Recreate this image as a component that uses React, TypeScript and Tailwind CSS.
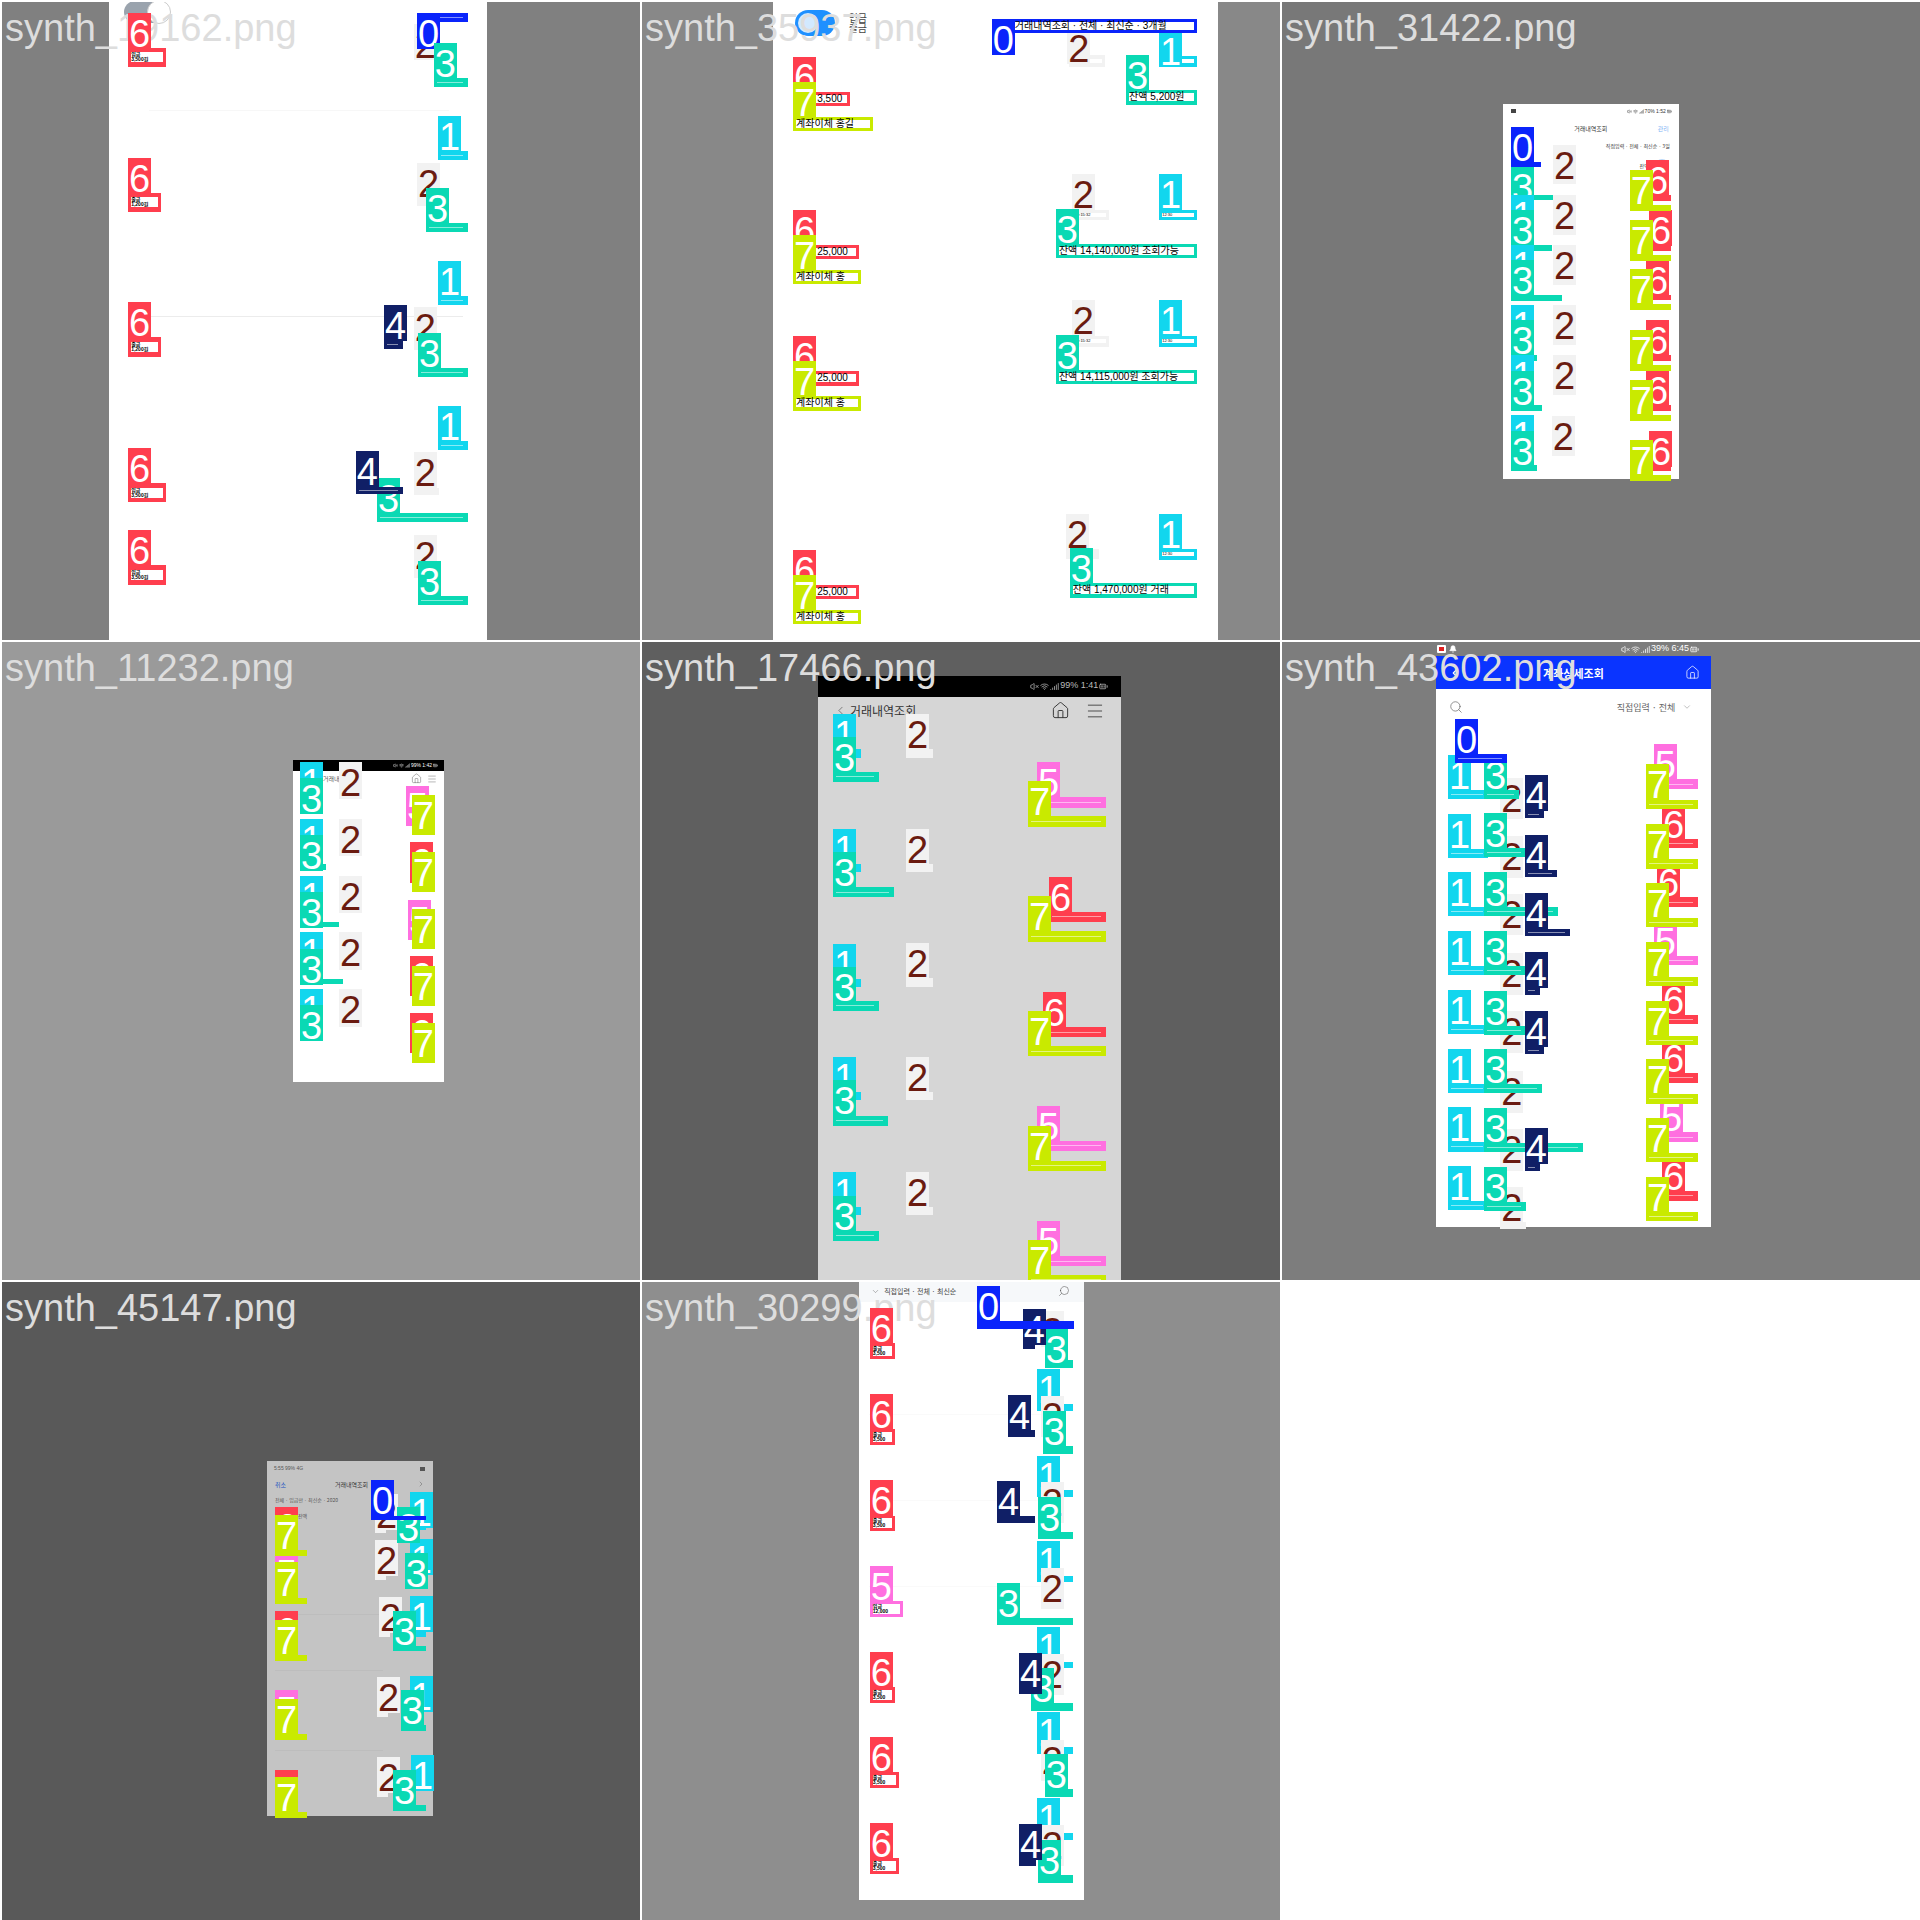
import { BatteryFull, Bell, ChevronDown, ChevronLeft, ChevronRight, Home, Menu, Search, Signal, VolumeX, Wifi } from "lucide-react";
import React from "react";

// every number in the box lists is read off the 2.45x crops of one 640px tile
const S = 2.45;
const px = (v: number) => v / S;
const pos = (v: number) => v / S - 2;

const TAG_BG: Record<number, string> = {
  0: "bg-[#0a24fb] text-white",
  1: "bg-[#12d6ee] text-white",
  2: "bg-[#f2f2f2] text-[#6a1b10]",
  3: "bg-[#0ad9b4] text-white",
  4: "bg-[#101f66] text-white",
  5: "bg-[#ff6fe0] text-white",
  6: "bg-[#ff3e4e] text-white",
  7: "bg-[#c9ea00] text-white",
};

const BAR_BG: Record<number, string> = {
  0: "bg-[#0a24fb]",
  1: "bg-[#12d6ee]",
  2: "bg-[#f2f2f2]",
  3: "bg-[#0ad9b4]",
  4: "bg-[#101f66]",
  5: "bg-[#ff6fe0]",
  6: "bg-[#ff3e4e]",
  7: "bg-[#c9ea00]",
};

type B = [number, number, number, number?, number?, number?, number?, string?];

function Bar({ b, lines }: { b: B; lines: boolean }) {
  const [c, , , x1, y1, x2, y2, text] = b;
  if (x1 === undefined) return null;
  const two = text?.includes("\n");
  const tall = y2! - y1! > 30;
  return (
    <div
      className={`absolute flex items-center overflow-hidden px-[3px] ${BAR_BG[c]}`}
      style={{ left: pos(x1), top: pos(y1!), width: px(x2! - x1), height: px(y2! - y1!) }}
    >
      {text ? (
        two ? (
          <span className="w-full whitespace-pre bg-white text-[5px] leading-[5px] font-bold text-black">{text}</span>
        ) : (
          <span className={`w-full whitespace-pre bg-white text-black ${tall ? "h-[8px] text-[10px] leading-[8px]" : "text-[4px] leading-[4px]"} ${c === 0 ? "ml-[20px]" : ""}`}>
            {text}
          </span>
        )
      ) : lines && c !== 2 ? (
        <span className="mr-[2px] h-px w-full bg-white/50" />
      ) : null}
    </div>
  );
}

function Tag({ b }: { b: B }) {
  const [c, x, y] = b;
  return (
    <div
      className={`absolute h-[36px] w-[23px] text-center font-['Liberation_Sans',sans-serif] text-[38px] leading-[43px] ${TAG_BG[c]}`}
      style={{ left: pos(x), top: pos(y) }}
    >
      {c}
    </div>
  );
}

function Boxes({ list, lines }: { list: B[]; lines: boolean }) {
  return (
    <>
      {list.map((b, i) => (
        <React.Fragment key={i}>
          <Bar b={b} lines={lines} />
          <Tag b={b} />
        </React.Fragment>
      ))}
    </>
  );
}

function Tile({
  name,
  bg,
  phone,
  phoneBg,
  boxes,
  lines = false,
  outside,
  children,
}: {
  name: string;
  bg: string;
  phone: [number, number, number, number];
  phoneBg: string;
  boxes: B[];
  lines?: boolean;
  outside?: React.ReactNode;
  children?: React.ReactNode;
}) {
  return (
    <div className={`relative h-[640px] w-[640px] overflow-hidden border-t-2 border-l-2 border-white ${bg}`}>
      <div
        className={`absolute flex flex-col overflow-hidden ${phoneBg}`}
        style={{ left: pos(phone[0]), top: pos(phone[1]), width: px(phone[2] - phone[0]), height: px(phone[3] - phone[1]) }}
      >
        {children}
      </div>
      {outside}
      <div className="absolute top-[4px] left-[3px] whitespace-nowrap text-[38px] leading-[44px] text-[#dddddd]">{name}</div>
      <Boxes list={boxes} lines={lines} />
    </div>
  );
}

const t1: B[] = [
  [2, 1014, 60, 1014, 147, 1072, 147],
  [0, 1022, 32, 1022, 32, 1147, 53],
  [3, 1063, 105, 1063, 190, 1147, 213],
  [6, 314, 32, 314, 118, 407, 163, "입금\n3,500원"],
  [1, 1073, 284, 1073, 370, 1147, 392],
  [2, 1022, 400, 1022, 488, 1078, 505],
  [3, 1044, 461, 1044, 546, 1147, 568],
  [6, 314, 387, 314, 473, 394, 519, "출금\n1,200원"],
  [1, 1073, 639, 1073, 725, 1147, 747],
  [2, 1014, 752, 1014, 840, 1070, 857],
  [3, 1024, 816, 1024, 902, 1147, 924],
  [4, 941, 747, 941, 835, 987, 855],
  [6, 314, 740, 314, 826, 394, 875, "출금\n1,200원"],
  [1, 1073, 995, 1073, 1080, 1147, 1102],
  [2, 1014, 1107, 1014, 1195, 1075, 1213],
  [3, 924, 1172, 924, 1257, 1147, 1279],
  [4, 872, 1105, 872, 1192, 987, 1210],
  [6, 314, 1098, 314, 1184, 407, 1230, "입금\n3,500원"],
  [2, 1014, 1311, 1014, 1398, 1070, 1415],
  [3, 1024, 1374, 1024, 1460, 1147, 1482],
  [6, 314, 1298, 314, 1385, 407, 1433, "입금\n3,500원"],
];

const t2: B[] = [
  [2, 1047, 68, 1050, 135, 1140, 163, "10:15:32"],
  [1, 1272, 75, 1272, 138, 1365, 163, "12:30"],
  [0, 862, 47, 862, 47, 1365, 82, "거래내역조회 · 전체 · 최신순 · 3개월"],
  [3, 1191, 135, 1191, 220, 1365, 257, "잔액 5,200원"],
  [6, 375, 140, 375, 226, 514, 260, "입금 3,500"],
  [7, 375, 202, 375, 287, 571, 321, "계좌이체 홍길"],
  [2, 1058, 426, 1058, 514, 1148, 538, "10:15:32"],
  [1, 1272, 426, 1272, 514, 1365, 538, "12:30"],
  [3, 1019, 512, 1019, 598, 1365, 632, "잔액 14,140,000원 조회가능"],
  [6, 375, 514, 375, 600, 537, 635, "입금 25,000"],
  [7, 375, 576, 375, 661, 541, 696, "계좌이체 홍"],
  [2, 1058, 735, 1058, 823, 1148, 850, "10:15:32"],
  [1, 1272, 735, 1272, 822, 1365, 850, "12:30"],
  [3, 1019, 821, 1019, 907, 1365, 942, "잔액 14,115,000원 조회가능"],
  [6, 375, 823, 375, 909, 537, 945, "입금 25,000"],
  [7, 375, 884, 375, 970, 541, 1006, "계좌이체 홍"],
  [2, 1044, 1259, 1044, 1345, 1125, 1370],
  [1, 1272, 1259, 1272, 1345, 1365, 1371, "12:30"],
  [3, 1053, 1343, 1053, 1428, 1365, 1465, "잔액 1,470,000원 거래"],
  [6, 375, 1347, 375, 1433, 537, 1468, "입금 25,000"],
  [7, 375, 1408, 375, 1494, 541, 1528, "계좌이체 홍"],
];

const t3: B[] = [
  [0, 566, 311, 566, 397, 639, 408],
  [3, 566, 410, 566, 477, 669, 491],
  [2, 669, 355, 669, 440, 725, 452],
  [1, 566, 478],
  [3, 566, 515, 566, 600, 666, 615],
  [2, 669, 478, 669, 560, 725, 576],
  [1, 566, 600],
  [3, 566, 637, 566, 723, 691, 737],
  [2, 669, 600, 669, 680, 725, 698],
  [1, 566, 747],
  [3, 566, 785, 566, 870, 630, 884],
  [2, 669, 747, 669, 830, 725, 845],
  [1, 566, 870],
  [3, 566, 908, 566, 993, 642, 1007],
  [2, 669, 870, 669, 950, 725, 968],
  [1, 566, 1017],
  [3, 566, 1055, 566, 1140, 630, 1154],
  [2, 666, 1020, 666, 1100, 722, 1118],
  [6, 897, 391, 897, 478, 958, 492],
  [6, 904, 514, 904, 600, 958, 614],
  [6, 897, 637, 897, 722, 958, 736],
  [6, 897, 784, 897, 870, 958, 885],
  [6, 897, 906, 897, 993, 958, 1007],
  [6, 904, 1056, 904, 1140, 958, 1155],
  [7, 857, 416, 857, 502, 958, 517],
  [7, 857, 539, 857, 625, 958, 639],
  [7, 857, 659, 857, 745, 958, 759],
  [7, 857, 808, 857, 894, 958, 908],
  [7, 857, 931, 857, 1017, 958, 1031],
  [7, 857, 1078, 857, 1164, 958, 1178],
];

const t4: B[] = [
  [1, 735, 299, 735, 385, 791, 416],
  [1, 735, 439, 735, 525, 791, 550],
  [1, 735, 578, 735, 664, 791, 690],
  [1, 735, 715, 735, 800, 791, 830],
  [1, 735, 855, 735, 940, 791, 970],
  [3, 735, 338, 735, 416, 779, 424],
  [3, 735, 477, 735, 550, 799, 563],
  [3, 735, 617, 735, 691, 831, 703],
  [3, 735, 756, 735, 831, 840, 843],
  [3, 735, 895, 735, 970, 791, 982],
  [2, 831, 299, 831, 375, 887, 390],
  [2, 831, 439, 831, 515, 887, 530],
  [2, 831, 578, 831, 655, 887, 670],
  [2, 831, 715, 831, 795, 887, 808],
  [2, 831, 855, 831, 930, 887, 948],
  [5, 995, 358, 995, 440, 1051, 456],
  [5, 1000, 637, 1000, 720, 1056, 735],
  [6, 1004, 495, 1004, 580, 1060, 595],
  [6, 1004, 774, 1004, 858, 1060, 872],
  [6, 1004, 914, 1004, 998, 1060, 1012],
  [7, 1009, 380, 1009, 462, 1066, 477],
  [7, 1009, 519, 1009, 602, 1066, 617],
  [7, 1009, 659, 1009, 742, 1066, 757],
  [7, 1009, 799, 1009, 882, 1066, 897],
  [7, 1009, 938, 1009, 1022, 1066, 1036],
];

const t5: B[] = [
  [1, 473, 182, 473, 268, 541, 288],
  [2, 652, 182, 652, 268, 718, 288],
  [3, 473, 238, 473, 323, 586, 347],
  [5, 973, 298, 973, 385, 1142, 412],
  [7, 951, 345, 951, 431, 1142, 458],
  [1, 473, 463, 473, 550, 541, 568],
  [2, 652, 463, 652, 549, 718, 568],
  [3, 473, 520, 473, 605, 622, 630],
  [6, 1002, 581, 1002, 666, 1142, 691],
  [7, 951, 627, 951, 713, 1142, 739],
  [1, 473, 745, 473, 830, 541, 850],
  [2, 652, 742, 652, 828, 718, 850],
  [3, 473, 802, 473, 884, 586, 909],
  [6, 987, 862, 987, 948, 1142, 973],
  [7, 951, 909, 951, 995, 1142, 1019],
  [1, 473, 1022, 473, 1107, 541, 1127],
  [2, 652, 1022, 652, 1107, 718, 1127],
  [3, 473, 1078, 473, 1165, 608, 1190],
  [5, 973, 1142, 973, 1227, 1142, 1252],
  [7, 951, 1191, 951, 1276, 1142, 1301],
  [1, 473, 1304, 473, 1389, 541, 1409],
  [2, 652, 1304, 652, 1390, 718, 1409],
  [3, 473, 1362, 473, 1447, 586, 1472],
  [5, 973, 1423, 973, 1509, 1142, 1534],
  [7, 951, 1470, 951, 1556, 1142, 1580],
];

const t6: B[] = [
  [1, 412, 282, 412, 368, 510, 390],
  [1, 412, 426, 412, 512, 510, 534],
  [1, 412, 568, 412, 654, 510, 676],
  [1, 412, 713, 412, 799, 510, 822],
  [1, 412, 857, 412, 943, 510, 965],
  [1, 412, 1002, 412, 1088, 510, 1110],
  [1, 412, 1144, 412, 1230, 510, 1254],
  [1, 412, 1289, 412, 1375, 510, 1396],
  [2, 540, 337, 540, 423, 596, 438],
  [2, 540, 480, 540, 566, 596, 582],
  [2, 540, 622, 540, 708, 596, 724],
  [2, 540, 767, 540, 853, 596, 869],
  [2, 540, 910, 540, 996, 596, 1012],
  [2, 540, 1056, 540, 1142, 596, 1158],
  [2, 540, 1198, 540, 1284, 596, 1300],
  [2, 540, 1340, 540, 1426, 602, 1442],
  [3, 500, 282, 500, 367, 585, 389],
  [3, 500, 423, 500, 510, 603, 532],
  [3, 500, 568, 500, 654, 681, 676],
  [3, 500, 713, 500, 799, 603, 821],
  [3, 500, 860, 500, 946, 603, 967],
  [3, 500, 1002, 500, 1088, 642, 1110],
  [3, 500, 1147, 500, 1232, 742, 1254],
  [3, 500, 1291, 500, 1377, 603, 1399],
  [4, 600, 331, 600, 417, 647, 436],
  [4, 600, 478, 600, 563, 679, 581],
  [4, 600, 620, 600, 707, 710, 725],
  [4, 600, 764, 600, 850, 637, 869],
  [4, 600, 909, 600, 996, 647, 1014],
  [4, 600, 1196, 600, 1282, 637, 1301],
  [5, 916, 255, 916, 341, 1024, 365],
  [6, 936, 402, 936, 488, 1024, 510],
  [6, 924, 544, 924, 630, 1024, 654],
  [5, 916, 688, 916, 774, 1024, 796],
  [6, 936, 833, 936, 919, 1024, 941],
  [6, 936, 976, 936, 1061, 1024, 1085],
  [5, 931, 1120, 931, 1206, 1024, 1230],
  [6, 936, 1264, 936, 1350, 1024, 1374],
  [7, 897, 305, 897, 391, 1024, 415],
  [7, 897, 451, 897, 537, 1024, 560],
  [7, 897, 595, 897, 681, 1024, 703],
  [7, 897, 740, 897, 826, 1024, 848],
  [7, 897, 884, 897, 970, 1024, 992],
  [7, 897, 1027, 897, 1113, 1024, 1136],
  [7, 897, 1171, 897, 1257, 1024, 1279],
  [7, 897, 1316, 897, 1402, 1024, 1423],
  [0, 429, 194, 429, 279, 556, 301],
];

const t7: B[] = [
  [6, 674, 555],
  [5, 674, 670],
  [6, 674, 811],
  [5, 674, 1005],
  [6, 674, 1200],
  [7, 674, 576, 674, 662, 751, 677],
  [7, 674, 692, 674, 778, 751, 793],
  [7, 674, 833, 674, 919, 751, 934],
  [7, 674, 1027, 674, 1113, 751, 1128],
  [7, 674, 1218, 674, 1304, 751, 1319],
  [2, 919, 525, 919, 608, 945, 620],
  [2, 919, 637, 919, 723, 945, 735],
  [2, 929, 777, 929, 863, 955, 875],
  [2, 924, 973, 924, 1058, 950, 1070],
  [2, 924, 1169, 924, 1255, 950, 1267],
  [1, 1004, 519, 1004, 600, 1044, 613],
  [1, 1004, 634, 1004, 720, 1044, 733],
  [1, 1004, 773, 1004, 860, 1044, 875],
  [1, 1004, 969],
  [1, 1007, 1163],
  [3, 973, 555],
  [3, 992, 670],
  [3, 963, 811, 963, 897, 1044, 909],
  [3, 982, 1005, 982, 1091, 1044, 1105],
  [3, 963, 1200, 963, 1287, 1044, 1301],
  [0, 909, 490, 909, 577, 1044, 587],
];

const t8: B[] = [
  [1, 973, 218, 973, 305, 1061, 321],
  [1, 973, 430, 973, 515, 1061, 532],
  [1, 973, 640, 973, 725, 1061, 740],
  [1, 973, 851, 973, 936, 1061, 951],
  [1, 973, 1058, 973, 1145, 1061, 1162],
  [1, 973, 1270, 973, 1355, 1061, 1372],
  [2, 982, 75],
  [2, 982, 285, 982, 370, 1038, 385],
  [2, 982, 495, 982, 580, 1038, 595],
  [2, 982, 705, 982, 790, 1038, 805],
  [2, 982, 917, 982, 1002, 1038, 1017],
  [2, 982, 1127, 982, 1212, 1038, 1227],
  [2, 982, 1335, 982, 1420, 1038, 1435],
  [3, 992, 120, 992, 197, 1061, 215],
  [3, 987, 321, 987, 407, 1061, 426],
  [3, 975, 532, 975, 618, 1061, 635],
  [3, 875, 742, 875, 828, 1061, 845],
  [3, 958, 950, 958, 1037, 1061, 1056],
  [3, 992, 1162, 992, 1248, 1061, 1267],
  [3, 975, 1371, 975, 1458, 1061, 1477],
  [4, 938, 71, 938, 160, 968, 170],
  [4, 902, 282, 902, 368, 968, 385],
  [4, 875, 492, 875, 578, 968, 595],
  [4, 929, 914, 929, 1000, 985, 1014],
  [4, 929, 1333, 929, 1420, 970, 1436],
  [6, 563, 69, 563, 155, 625, 194, "출금\n3,500"],
  [6, 563, 280, 563, 366, 625, 404, "출금\n3,500"],
  [6, 563, 490, 563, 577, 625, 615, "출금\n3,500"],
  [5, 563, 701, 563, 787, 644, 826, "입금\n12,000"],
  [6, 563, 911, 563, 997, 625, 1036, "출금\n3,500"],
  [6, 563, 1120, 563, 1206, 635, 1245, "출금\n3,500"],
  [6, 563, 1330, 563, 1416, 635, 1455, "출금\n3,500"],
  [0, 826, 15, 826, 100, 1063, 120],
];

const KR = "font-['Noto_Sans_CJK_KR',sans-serif]";

function Status({ text, size }: { text: string; size: number }) {
  return (
    <div className="flex items-center gap-px">
      <VolumeX size={size} />
      <Wifi size={size} />
      <Signal size={size} />
      <span style={{ fontSize: size }}>{text}</span>
      <BatteryFull size={size} />
    </div>
  );
}

export default function App() {
  return (
    <div className="grid h-[1920px] w-[1920px] grid-cols-3 grid-rows-3 bg-white font-['Liberation_Sans','Noto_Sans_CJK_KR',sans-serif]">
      <Tile name="synth_19162.png" bg="bg-[#808080]" phone={[267, 0, 1193, 1600]} phoneBg="bg-white" boxes={t1} lines>
        <div className="relative mt-[1px] ml-[15px] h-[22px] w-[46px] rounded-full bg-[#9aa3ad]">
          <span className="absolute top-[-1px] right-[-1px] h-[24px] w-[24px] rounded-full border border-[#cccccc] bg-white" />
        </div>
        <div className="mt-[87px] ml-[40px] h-px w-[300px] bg-[#f7f7f7]" />
        <div className="mt-[205px] ml-[42px] h-px w-[312px] bg-[#ececec]" />
      </Tile>

      <Tile name="synth_35937.png" bg="bg-[#888888]" phone={[325, 0, 1415, 1600]} phoneBg="bg-white" boxes={t2}>
        <div className={`mt-[10px] ml-[22px] flex items-center gap-[14px] ${KR}`}>
          <div className="relative h-[26px] w-[40px] rounded-full bg-[#1e90ff]">
            <span className="absolute top-[3px] left-[3px] h-[20px] w-[20px] rounded-full bg-white/80" />
          </div>
          <span className="text-[10px] leading-[10px] text-[#444444]">입금<br />출금</span>
        </div>
      </Tile>

      <Tile name="synth_31422.png" bg="bg-[#787878]" phone={[546, 254, 977, 1173]} phoneBg="bg-white" boxes={t3}>
        <div className="flex items-center justify-between pt-[4px] pr-[7px] pl-[8px] text-[4px] text-[#333333]">
          <span className="h-[4px] w-[5px] bg-[#444444]" />
          <Status text="70% 1:52" size={5} />
        </div>
        <div className={`relative mt-[9px] flex items-center justify-center text-[6px] text-[#333333] ${KR}`}>
          거래내역조회
          <span className="absolute right-[10px] text-[#7fb4f5]">관리</span>
        </div>
        <div className={`mt-[9px] pr-[9px] text-right text-[5px] text-[#333333] ${KR}`}>직접입력 · 전체 · 최신순 · 3일</div>
        <div className={`mt-[9px] flex items-center justify-end gap-[6px] pr-[10px] text-[5px] text-[#333333] ${KR}`}>
          잔액
          <span className="h-[14px] w-[14px] rounded-full bg-[#bcd8f8]" />
        </div>
      </Tile>

      <Tile name="synth_11232.png" bg="bg-[#9a9a9a]" phone={[718, 294, 1088, 1084]} phoneBg="bg-white" boxes={t4}>
        <div className="flex h-[11px] items-center justify-end bg-black pr-[6px] text-white">
          <Status text="99% 1:42" size={5} />
        </div>
        <div className={`flex items-center justify-between pt-[2px] pr-[7px] pl-[30px] text-[#555555] ${KR}`}>
          <span className="text-[6px]">거래내역</span>
          <div className="flex items-center gap-[5px]">
            <Home size={11} strokeWidth={1} />
            <Menu size={10} strokeWidth={1} />
          </div>
        </div>
      </Tile>

      <Tile name="synth_17466.png" bg="bg-[#5f5f5f]" phone={[436, 87, 1179, 1600]} phoneBg="bg-[#d6d6d6]" boxes={t5} lines>
        <div className="flex h-[21px] items-center justify-end bg-black pr-[13px] text-[#bbbbbb]">
          <Status text="99% 1:41" size={9} />
        </div>
        <div className={`mt-[4px] flex items-center pr-[16px] pl-[16px] text-[#333333] ${KR}`}>
          <ChevronLeft size={13} strokeWidth={1} />
          <span className="ml-[3px] text-[12px] leading-[16px]">거래내역조회</span>
          <Home className="mr-[15px] ml-auto" size={19} strokeWidth={1.2} />
          <Menu size={20} strokeWidth={1} />
        </div>
      </Tile>

      <Tile
        name="synth_43602.png"
        bg="bg-[#7d7d7d]"
        phone={[381, 40, 1057, 1438]}
        phoneBg="bg-white"
        boxes={t6}
        lines
        outside={
          <div className="absolute top-0 left-[155px] flex h-[14px] w-[266px] items-center justify-between pr-[4px] text-white">
            <div className="flex items-center gap-[3px]">
              <span className="flex h-[8px] w-[9px] items-center justify-center rounded-[1px] bg-white">
                <span className="h-[4px] w-[5px] bg-[#e02020]" />
              </span>
              <Bell size={8} fill="white" />
            </div>
            <Status text="39% 6:45" size={9} />
          </div>
        }
      >
        <div className={`flex h-[33px] items-center justify-between bg-[#0a34ff] pr-[11px] pl-[12px] text-white ${KR}`}>
          <ChevronLeft size={14} />
          <span className="text-[11px] font-bold">계좌상세조회</span>
          <Home size={15} strokeWidth={1.2} />
        </div>
        <div className={`flex items-center justify-between pt-[11px] pr-[19px] pl-[13px] text-[#666666] ${KR}`}>
          <Search size={14} strokeWidth={1.2} />
          <div className="flex items-center gap-[7px] text-[9px]">
            직접입력 · 전체
            <ChevronDown size={10} strokeWidth={1} />
          </div>
        </div>
      </Tile>

      <Tile name="synth_45147.png" bg="bg-[#595959]" phone={[654, 444, 1061, 1313]} phoneBg="bg-[#c4c4c4]" boxes={t7}>
        <div className="flex items-center justify-between pt-[4px] pr-[8px] pl-[7px] text-[5px] text-[#555555]">
          <span>5:55 99% 4G</span>
          <span className="h-[4px] w-[5px] bg-[#555555]" />
        </div>
        <div className={`mt-[7px] flex items-center justify-between pr-[8px] pl-[8px] text-[6px] text-[#333333] ${KR}`}>
          <span className="text-[#2050c0]">취소</span>
          <span>거래내역조회</span>
          <ChevronRight size={8} strokeWidth={1} />
        </div>
        <div className={`mt-[7px] pl-[8px] text-[5px] text-[#555555] ${KR}`}>전체 · 입금만 · 최신순 · 2020</div>
        <div className={`mt-[9px] pl-[31px] text-[5px] text-[#555555] ${KR}`}>잔액</div>
        <div className="mt-[94px] ml-[8px] h-px w-[108px] bg-[#bdbdbd]" />
        <div className="mt-[55px] ml-[8px] h-px w-[108px] bg-[#bdbdbd]" />
        <div className="mt-[79px] ml-[8px] h-px w-[108px] bg-[#bdbdbd]" />
      </Tile>

      <Tile name="synth_30299.png" bg="bg-[#8e8e8e]" phone={[537, 0, 1088, 1520]} phoneBg="bg-white" boxes={t8}>
        <div className={`flex h-[22px] items-center justify-between bg-[#f6f8fa] pr-[14px] pl-[12px] text-[#444444] ${KR}`}>
          <div className="flex items-center gap-[4px] text-[7px]">
            <ChevronDown size={9} strokeWidth={1} />
            직접입력 · 전체 · 최신순
          </div>
          <Search size={12} strokeWidth={1} className="-scale-x-100" />
        </div>
        <div className="mt-[112px] ml-[10px] h-px w-[190px] bg-[#fafafa]" />
        <div className="mt-[85px] ml-[10px] h-px w-[190px] bg-[#fafafa]" />
        <div className="mt-[85px] ml-[10px] h-px w-[190px] bg-[#fafafa]" />
      </Tile>

      <div className="bg-white" />
    </div>
  );
}
